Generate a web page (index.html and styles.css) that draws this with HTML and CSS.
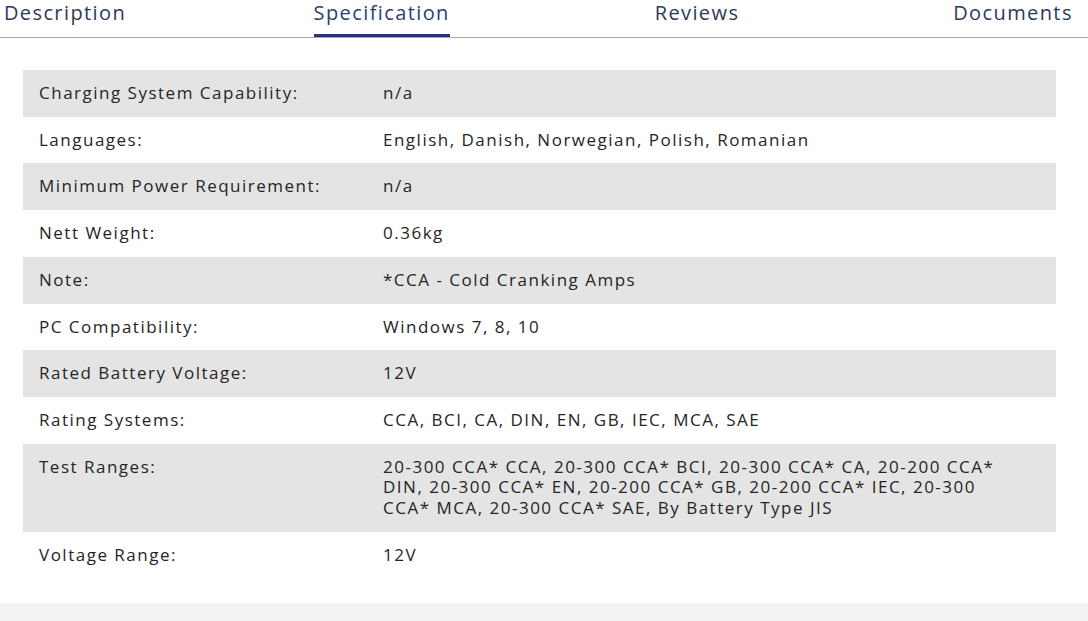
FILE: index.html
```html
<!DOCTYPE html>
<html>
<head>
<meta charset="utf-8">
<link rel="stylesheet" href="styles.css">
</head>
<body>
<nav class="tabs">
  <div class="tabs-inner">
    <a class="tab">Description</a>
    <a class="tab active"><span>Specification</span></a>
    <a class="tab">Reviews</a>
    <a class="tab">Documents</a>
  </div>
</nav>
<section class="spec">
  <table class="spec-table">
    <tr><td class="label">Charging System Capability:</td><td>n/a</td></tr>
    <tr><td class="label">Languages:</td><td>English, Danish, Norwegian, Polish, Romanian</td></tr>
    <tr><td class="label">Minimum Power Requirement:</td><td>n/a</td></tr>
    <tr><td class="label">Nett Weight:</td><td>0.36kg</td></tr>
    <tr><td class="label">Note:</td><td>*CCA - Cold Cranking Amps</td></tr>
    <tr><td class="label">PC Compatibility:</td><td>Windows 7, 8, 10</td></tr>
    <tr><td class="label">Rated Battery Voltage:</td><td>12V</td></tr>
    <tr><td class="label">Rating Systems:</td><td>CCA, BCI, CA, DIN, EN, GB, IEC, MCA, SAE</td></tr>
    <tr><td class="label">Test Ranges:</td><td>20-300 CCA* CCA, 20-300 CCA* BCI, 20-300 CCA* CA, 20-200 CCA* DIN, 20-300 CCA* EN, 20-200 CCA* GB, 20-200 CCA* IEC, 20-300 CCA* MCA, 20-300 CCA* SAE, By Battery Type JIS</td></tr>
    <tr><td class="label">Voltage Range:</td><td>12V</td></tr>
  </table>
</section>
<footer class="band"></footer>
</body>
</html>
```
FILE: styles.css
```css
html, body { margin: 0; padding: 0; background: #fff; }
body { font-family: "Open Sans", "Liberation Sans", sans-serif; color: #252525; overflow: hidden; height: 621px; }
.tabs { border-bottom: 1px solid #a8a8a8; height: 37px; overflow: hidden; }
.tabs-inner { display: grid; grid-template-columns: repeat(4, 316px); margin-left: -93px; width: 1264px; }
.tab { text-align: center; font-size: 20px; letter-spacing: 1.4px; color: #2b3a5c; line-height: 25px; height: 37px; box-sizing: border-box; }
.tab.active span { display: inline-block; height: 37px; box-sizing: border-box; border-bottom: 3px solid #1f3775; color: #2b3e78; margin-right: -1.4px; }
.spec { padding: 32px 32px 0 23px; }
.spec-table { width: 1033px; border-collapse: collapse; font-size: 17px; letter-spacing: 1.5px; }
.spec-table td { padding: 13px 32px 13px 0; line-height: 20.7px; vertical-align: top; }
.spec-table td.label { padding-left: 16px; width: 312px; }
.spec-table tr:nth-child(odd) { background: #e4e4e4; }
.band { position: absolute; left: 0; right: 0; top: 603px; height: 18px; background: #f3f3f3; }
```
